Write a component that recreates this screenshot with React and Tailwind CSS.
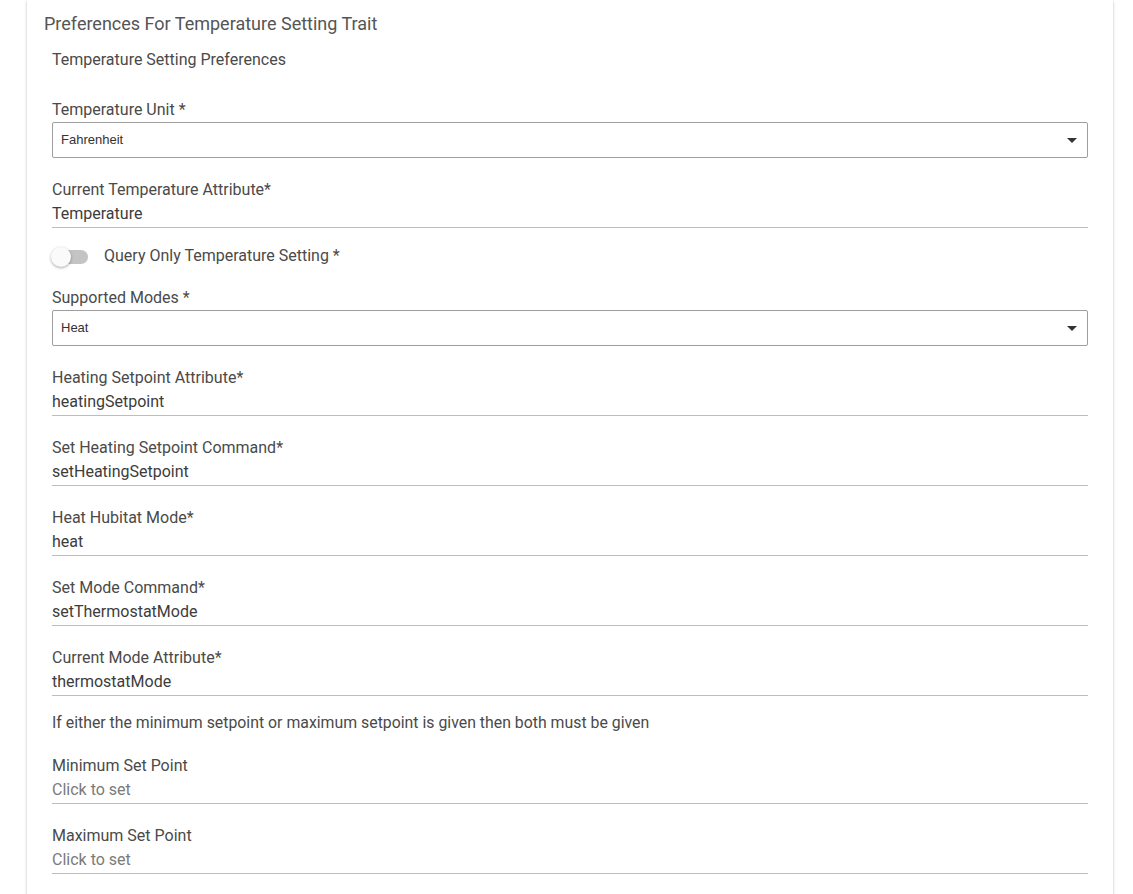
import React from 'react';

const font = { fontFamily: 'Roboto, "Liberation Sans", Arial, sans-serif' };

function SelectField({ label, value }) {
  return (
    <div>
      <div className="text-[16px] leading-6 text-[#4a4a4a]">{label}</div>
      <div className="flex h-[36px] items-center justify-between rounded-[2px] border border-[#9e9e9e] pl-2 pr-[10px]">
        <span className="text-[13px] text-[#333] font-['Liberation_Sans',Arial,sans-serif]">{value}</span>
        <svg width="10" height="5" viewBox="0 0 10 5">
          <path d="M0 0 L10 0 L5 5 Z" fill="#333" />
        </svg>
      </div>
    </div>
  );
}

function TextField({ label, value, placeholder, className = '' }) {
  return (
    <div className={className}>
      <div className="text-[16px] leading-6 text-[#4a4a4a]">{label}</div>
      <div className="h-[26px] border-b border-[#bdbdbd] text-[16px] leading-6">
        {value ? <span className="text-[#3c3c3c]">{value}</span> : <span className="text-[#7a7a7a]">{placeholder}</span>}
      </div>
    </div>
  );
}

export default function App() {
  return (
    <div className="h-[894px] overflow-hidden bg-white" style={font}>
      <div className="ml-[27px] h-[930px] w-[1086px] bg-white px-[17px] shadow-[0_1px_3px_rgba(0,0,0,0.2),0_1px_1px_rgba(0,0,0,0.14),0_2px_1px_-1px_rgba(0,0,0,0.12)]">
        <h2 className="pt-[10px] text-[18px] leading-7 text-[#555]">Preferences For Temperature Setting Trait</h2>
        <div className="px-2">
          <div className="mt-[10px] text-[16px] leading-6 text-[#4a4a4a]">Temperature Setting Preferences</div>

          <div className="mt-[26px]">
            <SelectField label="Temperature Unit *" value="Fahrenheit" />
          </div>

          <TextField className="mt-5" label="Current Temperature Attribute*" value="Temperature" />

          <div className="mt-[17px] flex h-6 items-center">
            <div className="relative h-[14px] w-[36px] shrink-0">
              <div className="absolute inset-y-0 left-[1px] right-0 rounded-full bg-[#c4c4c4]" />
              <div className="absolute -left-[1px] -top-[3px] h-[20px] w-[20px] rounded-full bg-[#fafafa] shadow-[0_1px_3px_rgba(0,0,0,0.35)]" />
            </div>
            <span className="ml-4 text-[16px] leading-6 text-[#4a4a4a] -translate-y-[1px]">Query Only Temperature Setting *</span>
          </div>

          <div className="mt-[17px]">
            <SelectField label="Supported Modes *" value="Heat" />
          </div>

          <TextField className="mt-5" label="Heating Setpoint Attribute*" value="heatingSetpoint" />
          <TextField className="mt-5" label="Set Heating Setpoint Command*" value="setHeatingSetpoint" />
          <TextField className="mt-5" label="Heat Hubitat Mode*" value="heat" />
          <TextField className="mt-5" label="Set Mode Command*" value="setThermostatMode" />
          <TextField className="mt-5" label="Current Mode Attribute*" value="thermostatMode" />

          <div className="mt-[15px] text-[15.85px] leading-6 text-[#4a4a4a]">
            If either the minimum setpoint or maximum setpoint is given then both must be given
          </div>

          <TextField className="mt-[19px]" label="Minimum Set Point" placeholder="Click to set" />
          <TextField className="mt-5" label="Maximum Set Point" placeholder="Click to set" />
        </div>
      </div>
    </div>
  );
}
